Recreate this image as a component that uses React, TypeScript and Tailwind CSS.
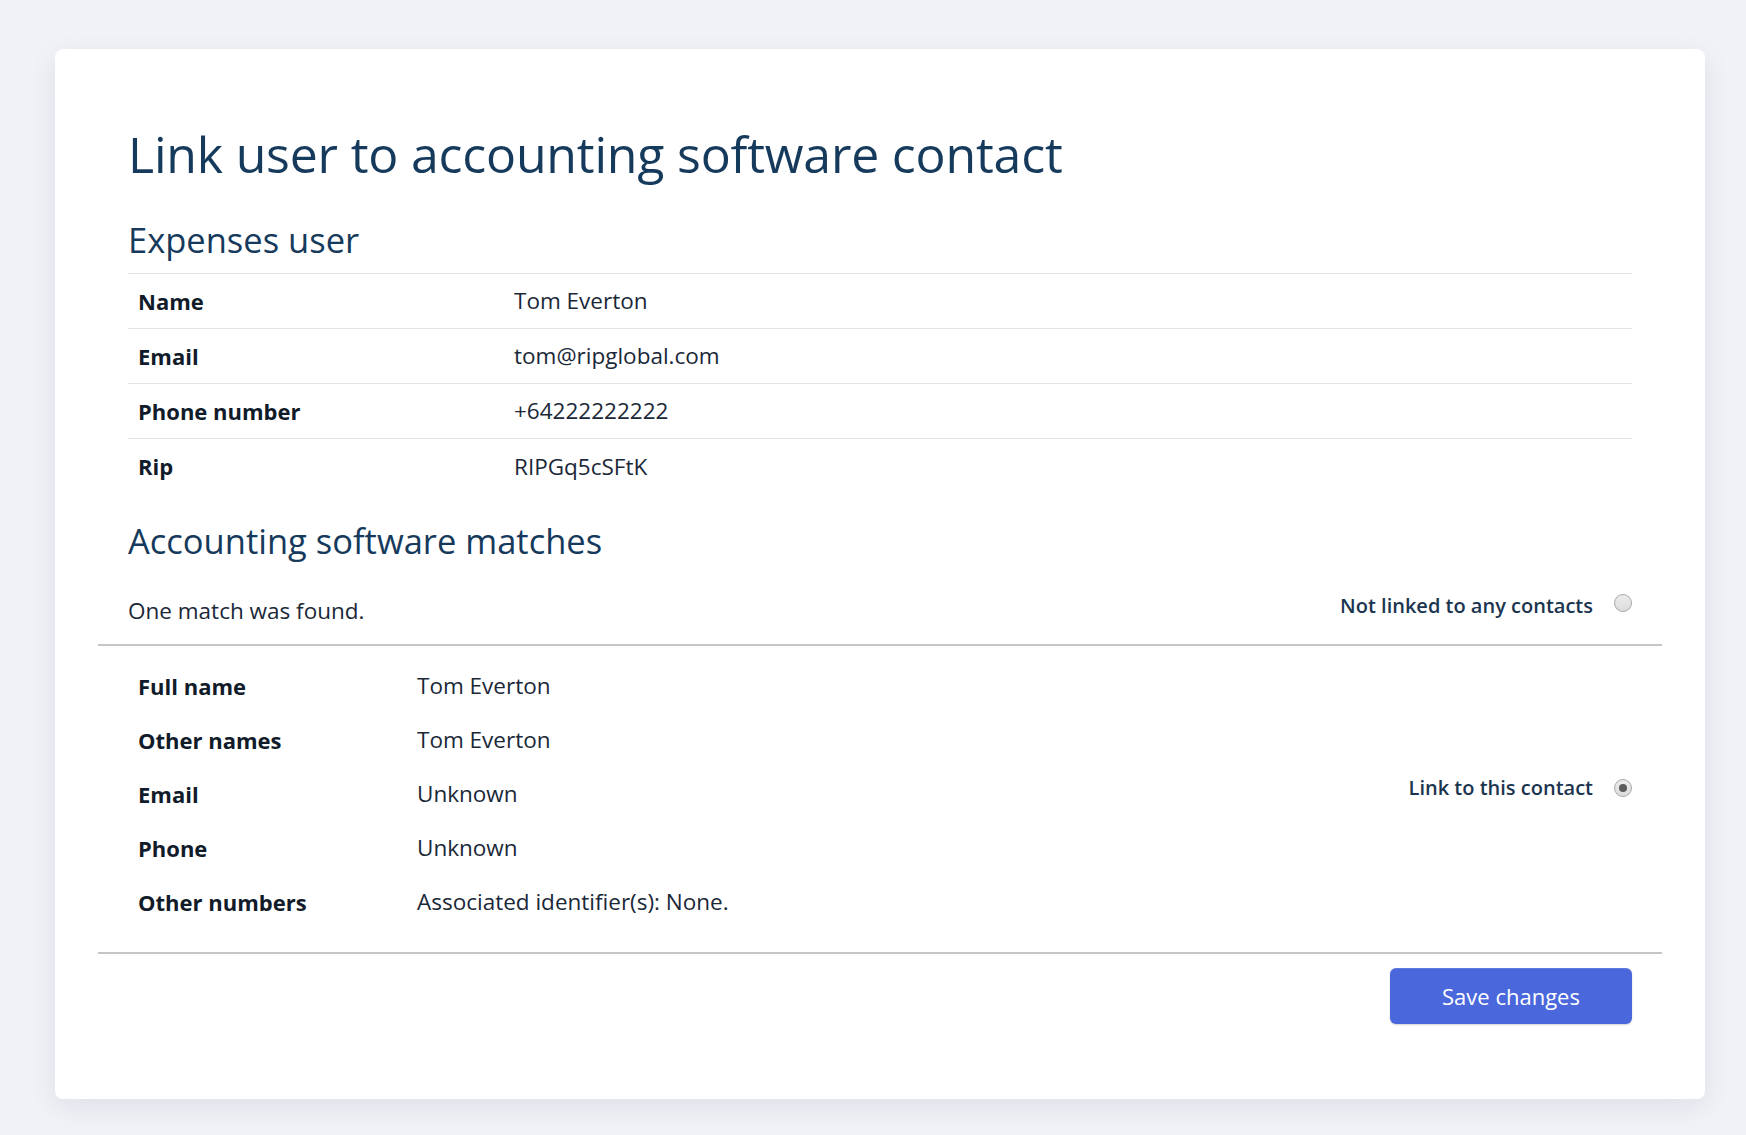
import React from 'react'

const font = { fontFamily: '"Open Sans", "Noto Sans", Arial, sans-serif' }

const expensesUser = [
  { label: 'Name', value: 'Tom Everton' },
  { label: 'Email', value: 'tom@ripglobal.com' },
  { label: 'Phone number', value: '+64222222222' },
  { label: 'Rip', value: 'RIPGq5cSFtK' },
]

const matchDetails = [
  { label: 'Full name', value: 'Tom Everton' },
  { label: 'Other names', value: 'Tom Everton' },
  { label: 'Email', value: 'Unknown' },
  { label: 'Phone', value: 'Unknown' },
  { label: 'Other numbers', value: 'Associated identifier(s): None.' },
]

const Radio = ({ checked, className = '' }: { checked?: boolean; className?: string }) => (
  <span
    className={`flex h-[18px] w-[18px] shrink-0 items-center justify-center rounded-full border border-[#a9a9a9] bg-gradient-to-b from-[#ececec] to-[#dcdcdc] ${className}`}
  >
    {checked && <span className="h-[8px] w-[8px] rounded-full bg-[#5c5c5c]" />}
  </span>
)

export default function App() {
  return (
    <div
      className="min-h-screen bg-[#f1f2f7] pb-[37px] pl-[55px] pr-[41px] pt-[49px]"
      style={font}
    >
      <div className="rounded-lg bg-white px-[73px] pb-[75px] pt-[75px] shadow-[0_8px_28px_rgba(20,30,70,0.08)]">
        {/* Page title */}
        <h1 className="text-[50px] leading-[60px] tracking-[-0.2px] text-[#163a5c]">
          Link user to accounting software contact
        </h1>

        {/* Expenses user */}
        <h2 className="mt-[36px] border-b border-[#e3e4e6] pb-[13px] text-[34.5px] leading-[40px] text-[#163a5c]">
          Expenses user
        </h2>
        <div>
          {expensesUser.map((row, i) => (
            <div
              key={row.label}
              className={`flex h-[55px] items-center pl-[10px] ${
                i < expensesUser.length - 1 ? 'border-b border-[#e3e4e6]' : ''
              }`}
            >
              <span className="w-[376px] text-[22px] font-bold text-[#111b29]">{row.label}</span>
              <span className="text-[22.5px] text-[#1a2838]">{row.value}</span>
            </div>
          ))}
        </div>

        {/* Accounting software matches */}
        <h2 className="mt-[27px] text-[34.5px] leading-[40px] text-[#163a5c]">
          Accounting software matches
        </h2>
        <div className="mt-[31px] flex items-start justify-between">
          <p className="pt-[4px] text-[22.5px] leading-[30px] text-[#1a2838]">One match was found.</p>
          <label className="flex items-start gap-[21px]">
            <span className="text-[20px] font-semibold leading-[28px] text-[#1b3550]">
              Not linked to any contacts
            </span>
            <Radio className="mt-[2px]" />
          </label>
        </div>

        <div className="-mx-[30px] mt-[18px] border-t-2 border-[#c6c6c6]" />

        <div className="flex items-center justify-between pb-[23px] pt-[13px]">
          <div className="pl-[10px]">
            {matchDetails.map((row) => (
              <div key={row.label} className="flex h-[54px] items-center">
                <span className="w-[279px] text-[22px] font-bold text-[#111b29]">{row.label}</span>
                <span className="text-[22.5px] text-[#1a2838]">{row.value}</span>
              </div>
            ))}
          </div>
          <label className="mb-[13px] flex items-center gap-[21px]">
            <span className="text-[20px] font-semibold leading-[28px] text-[#1b3550]">
              Link to this contact
            </span>
            <Radio checked />
          </label>
        </div>

        <div className="-mx-[30px] border-t-2 border-[#c6c6c6]" />

        <div className="mt-[14px] flex justify-end">
          <button className="h-[56px] w-[242px] rounded-md bg-[#4a67dc] text-[22px] text-white shadow-[inset_0_1px_0_rgba(255,255,255,0.12),0_1px_2px_rgba(0,0,0,0.18)]">
            Save changes
          </button>
        </div>
      </div>
    </div>
  )
}
